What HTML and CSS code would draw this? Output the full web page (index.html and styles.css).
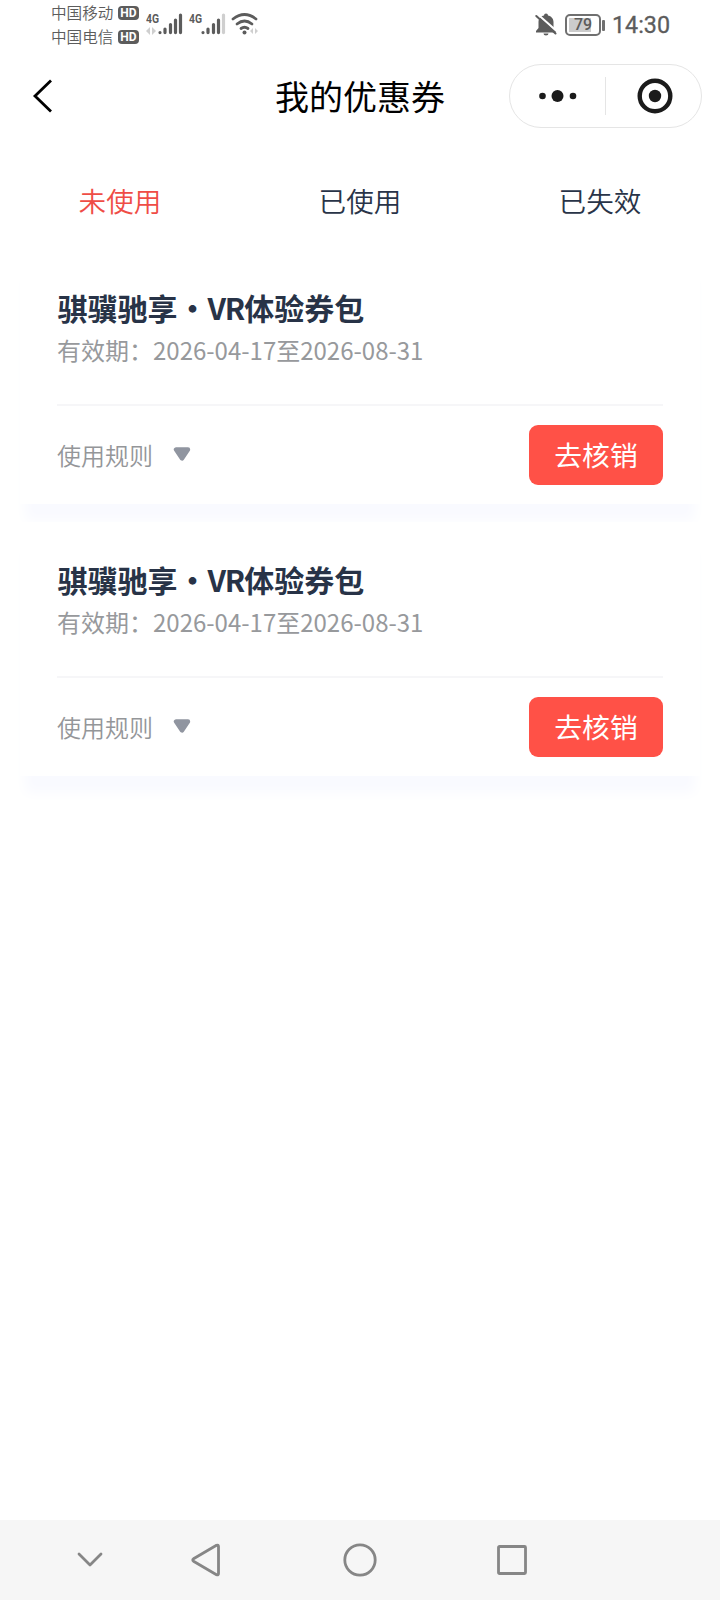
FILE: index.html
```html
<!DOCTYPE html>
<html lang="zh-CN">
<head>
<meta charset="utf-8">
<title>我的优惠券</title>
<link rel="stylesheet" href="styles.css">
</head>
<body>
<div class="screen">
  <header class="status">
    <div class="carriers">
      <div class="carrier">中国移动<span class="hd">HD</span></div>
      <div class="carrier">中国电信<span class="hd">HD</span></div>
    </div>
    <svg class="signals" width="114" height="48" viewBox="0 0 114 48">
      <g class="net-label">
        <text x="0" y="22.500" textLength="13" lengthAdjust="spacingAndGlyphs">4G</text>
        <text x="43" y="22.500" textLength="13" lengthAdjust="spacingAndGlyphs">4G</text>
      </g>
      <g class="bars">
        <path d="M14 32.500v.1M19 29v3.600M24.500 24.500v8.100M29.500 20v12.600M34.500 15v17.600"/>
        <path d="M57 32.500v.1M62 29v3.600M67.500 24.500v8.100M72.500 20v12.600"/>
        <path class="dim" d="M77.500 15v17.600"/>
      </g>
      <path class="traffic" d="M4 27v8l-4-4zM6 27v8l4-4z"/>
      <path class="traffic" d="M107 28v6l-3-3zM109 28v6l3-3z"/>
      <g class="wifi">
        <path d="M87 19Q98.500 10 110 19"/>
        <path d="M91 24Q98.500 18 106 24"/>
        <path d="M95 28.500Q98.500 26 102 28.500"/>
      </g>
      <circle cx="98.500" cy="32.500" r="2" fill="#5c5c5c"/>
    </svg>
    <div class="status-right">
      <svg width="22" height="24" viewBox="0 0 22 24">
        <path d="M1 19.500V18l2.500-3V9c0-3.500 2.500-6 5.500-6.500a2 2 0 0 1 4 0c3 .5 5.500 3 5.500 6.500v6l2.500 3v1.500zM8.500 20.500h5a2.500 2 0 0 1-5 0z" fill="#5c5c5c"/>
        <path d="M3 1.500l20 17.800" stroke="#fff" stroke-width="2"/>
        <path d="M1.300 3l19.200 17.500" stroke="#5c5c5c" stroke-width="2" stroke-linecap="round"/>
      </svg>
      <div class="battery"><span class="level">79</span></div>
      <time class="clock">14:30</time>
    </div>
  </header>

  <nav class="navbar">
    <svg class="back" width="24" height="36" viewBox="0 0 24 36"><path d="M19 2.500L3 18l16 15.500" fill="none" stroke="#000" stroke-width="2.800"/></svg>
    <h1 class="heading">我的优惠券</h1>
    <div class="capsule">
      <svg width="95" height="62" viewBox="0 0 95 62" fill="#1b1b1b"><circle cx="32.500" cy="31" r="3.300"/><circle cx="47.500" cy="31" r="6"/><circle cx="63" cy="31" r="3.300"/></svg>
      <i class="capsule-line"></i>
      <svg width="95" height="62" viewBox="0 0 95 62"><circle cx="49" cy="31" r="15.300" fill="none" stroke="#1b1b1b" stroke-width="4.400"/><circle cx="49" cy="31" r="6.200" fill="#1b1b1b"/></svg>
    </div>
  </nav>

  <div class="tabs">
    <span class="tab active">未使用</span>
    <span class="tab">已使用</span>
    <span class="tab">已失效</span>
  </div>

  <main class="list">
    <section class="card">
      <h2 class="name">骐骥驰享・<span class="latin">VR</span>体验券包</h2>
      <p class="valid">有效期：2026-04-17至2026-08-31</p>
      <div class="foot">
        <span class="rules">使用规则</span>
        <svg class="arrow" width="18" height="16" viewBox="0 0 18 16"><path d="M3 3.500h12L9 12.500z" fill="#9095a0" stroke="#9095a0" stroke-width="4.400" stroke-linejoin="round"/></svg>
        <button class="redeem">去核销</button>
      </div>
    </section>
    <section class="card">
      <h2 class="name">骐骥驰享・<span class="latin">VR</span>体验券包</h2>
      <p class="valid">有效期：2026-04-17至2026-08-31</p>
      <div class="foot">
        <span class="rules">使用规则</span>
        <svg class="arrow" width="18" height="16" viewBox="0 0 18 16"><path d="M3 3.500h12L9 12.500z" fill="#9095a0" stroke="#9095a0" stroke-width="4.400" stroke-linejoin="round"/></svg>
        <button class="redeem">去核销</button>
      </div>
    </section>
  </main>

  <footer class="sysnav">
    <svg class="hide" width="28" height="18" viewBox="0 0 28 18"><path d="M3 3l11 11L25 3"/></svg>
    <svg class="return" width="32" height="36" viewBox="0 0 32 36"><path d="M3.500 16.800L26.500 3.300q2-.8 2 1.200v27q0 2-2 1.200L3.500 19.200q-1.500-1.200 0-2.400z"/></svg>
    <svg class="home" width="36" height="36" viewBox="0 0 36 36"><circle cx="18" cy="18" r="15.200"/></svg>
    <svg class="recent" width="32" height="32" viewBox="0 0 32 32"><rect x="2.500" y="2.500" width="27" height="27" rx="1"/></svg>
  </footer>
</div>
</body>
</html>
```
FILE: styles.css
```css
* { box-sizing: border-box; margin: 0; padding: 0; }

body {
  background: #fff;
  font-family: "Noto Sans CJK SC", sans-serif;
  font-weight: 350;
}

.screen {
  display: flex;
  flex-direction: column;
  width: 720px;
  height: 1600px;
  background: #fff;
  overflow: hidden;
}

/* System status bar */
.status {
  display: flex;
  height: 48px;
  padding: 0 50px 0 51px;
  color: #5c5c5c;
}

.carriers { width: 94.500px; }

.carrier {
  display: flex;
  align-items: center;
  height: 24px;
  font-size: 15.600px;
  line-height: 24px;
  white-space: nowrap;
}

.hd {
  width: 21px;
  height: 14px;
  margin: 2px 0 0 4.500px;
  border-radius: 4px;
  background: #5c5c5c;
  color: #fff;
  font: bold 12px/14px Roboto, sans-serif;
  text-align: center;
}

.net-label { fill: #5c5c5c; font: bold 13px Roboto, sans-serif; }
.bars path { fill: none; stroke: #5c5c5c; stroke-width: 3.200; stroke-linecap: round; }
.bars .dim { stroke: #cfcfcf; }
.traffic { fill: #cfcfcf; }
.wifi path { fill: none; stroke: #5c5c5c; stroke-width: 2.800; stroke-linecap: round; }

.status-right {
  display: flex;
  align-items: center;
  height: 48px;
  margin-left: auto;
  padding-top: 1px;
}

.battery {
  position: relative;
  width: 36px;
  height: 22px;
  margin: 0 11px 0 8px;
  padding: 2px;
  border: 2px solid #707070;
  border-radius: 5px;
}

.battery::after {
  content: "";
  position: absolute;
  left: 35px;
  top: 4px;
  width: 3px;
  height: 11px;
  border-radius: 1px;
  background: #707070;
}

.level {
  display: block;
  height: 14px;
  background: linear-gradient(90deg, #ccc 79%, transparent 79%);
  font: 500 16px/14px Roboto, sans-serif;
  text-align: center;
}

.clock { font: 23.300px/48px Roboto, sans-serif; -webkit-text-stroke: .3px #5c5c5c; }

/* Mini-program navigation */
.navbar {
  display: grid;
  grid-template-columns: 243px 182px 1fr;
  align-items: center;
  height: 96px;
  padding: 0 18px 0 32px;
}

.heading {
  color: #000;
  font-size: 34px;
  font-weight: 400;
  line-height: 50px;
  white-space: nowrap;
}

.back { margin-bottom: 1px; }

.capsule {
  display: flex;
  align-items: center;
  justify-self: end;
  width: 193px;
  height: 64px;
  border: 1px solid #e5e5e5;
  border-radius: 32px;
}

.capsule-line { width: 1px; height: 38px; background: #e5e5e5; }

/* Coupon state tabs */
.tabs {
  display: grid;
  grid-template-columns: repeat(3, 1fr);
  height: 106px;
  padding-top: 36px;
}

.tab {
  color: #293448;
  font-size: 27.600px;
  line-height: 40px;
  text-align: center;
}

.tab.active { color: #ef4d46; }

/* Coupons */
.list {
  display: flex;
  flex: 1;
  flex-direction: column;
  gap: 18px;
  padding: 0 20px;
}

.card {
  position: relative;
  height: 254px;
  padding: 36px 37px 0;
  background: #fff;
  box-shadow: 0 22px 12px -5px #f9faff;
}

.name {
  padding-left: .5px;
  color: #283347;
  font-size: 30px;
  font-weight: 700;
  line-height: 42px;
}

.latin { letter-spacing: -1.200px; }

.valid {
  margin: 4px 0 36px;
  color: #97999c;
  font-size: 24px;
  font-weight: 400;
  line-height: 36px;
}

.foot {
  display: flex;
  align-items: center;
  height: 100px;
  border-top: 2px solid #f6f6f8;
}

.rules { color: #949699; font-size: 24px; line-height: 36px; }
.arrow { margin: 0 0 2px 20px; }

.redeem {
  width: 134px;
  height: 60px;
  margin-left: auto;
  padding-bottom: 2px;
  border: 0;
  border-radius: 9px;
  background: #ff5147;
  color: #fff;
  font: 27.800px/58px "Noto Sans CJK SC", sans-serif;
}

/* System navigation */
.sysnav {
  display: flex;
  align-items: center;
  height: 80px;
  padding-left: 76px;
  background: #f6f6f6;
}

.sysnav svg { fill: none; stroke: #868686; stroke-width: 2.800; stroke-linecap: round; stroke-linejoin: round; }
.return { margin-left: 86px; }
.home { margin-left: 120px; }
.recent { margin-left: 118px; }
```
